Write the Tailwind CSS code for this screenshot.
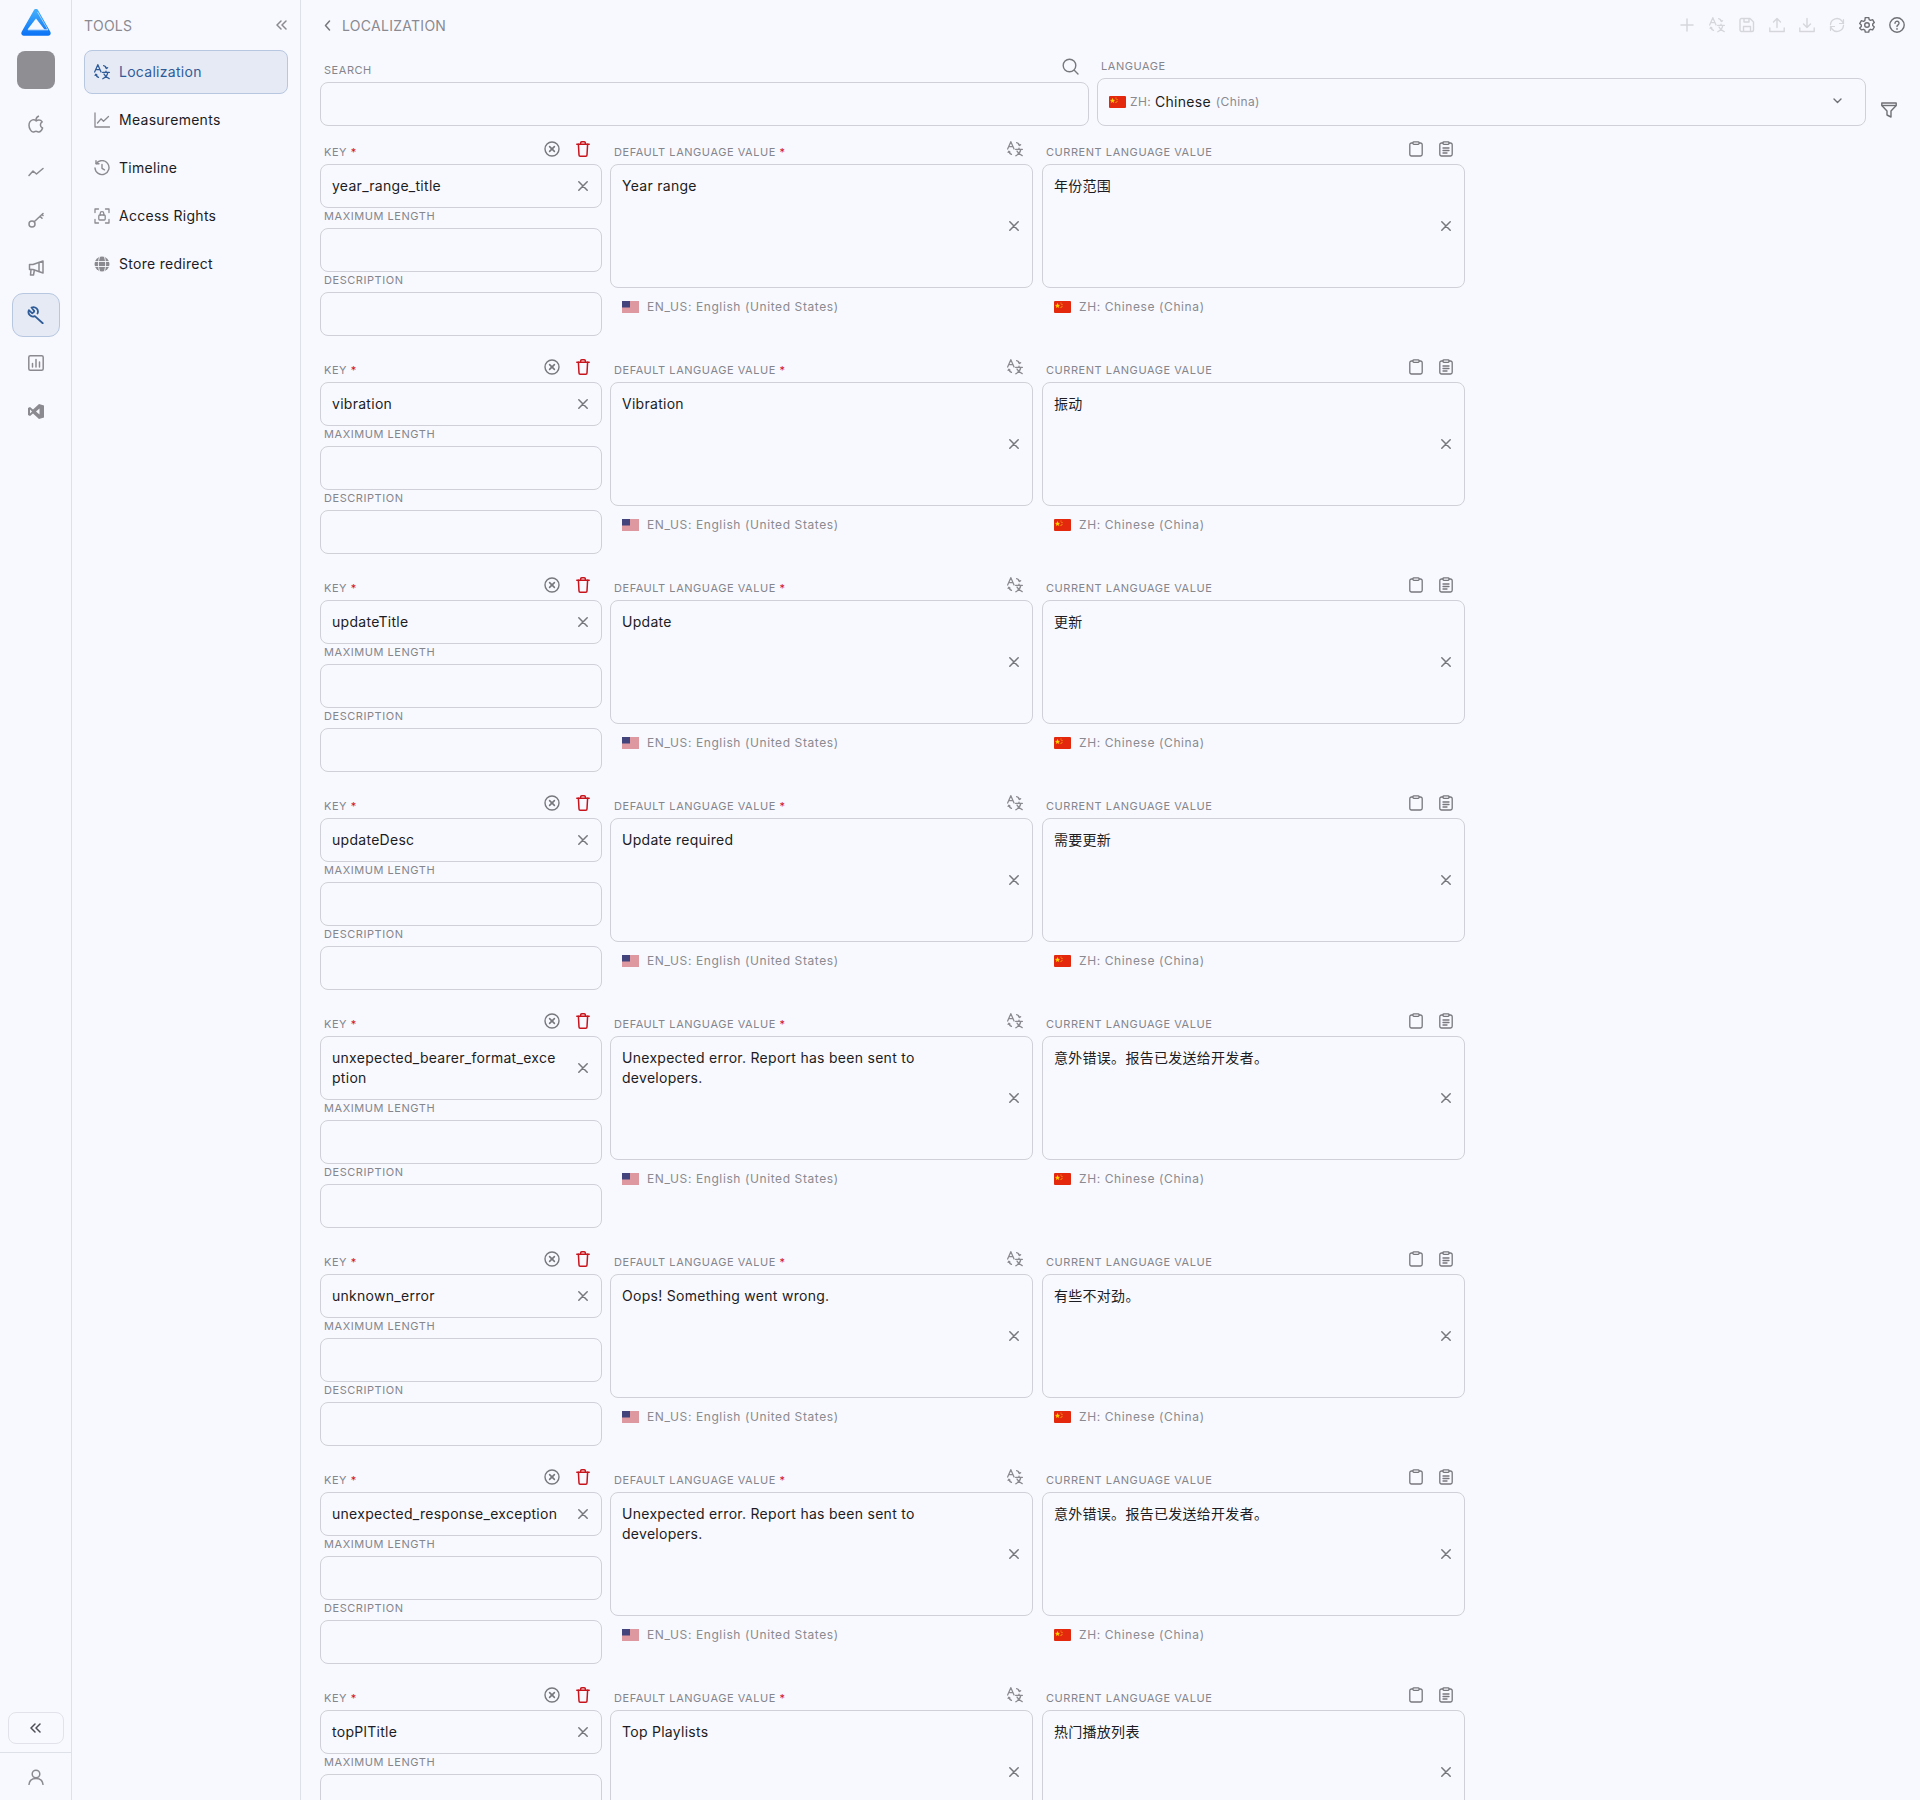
<!DOCTYPE html>
<html lang="en">
<head>
    <meta charset="UTF-8">
    <title>Localization</title>
    <script src="https://cdn.jsdelivr.net/npm/@tailwindcss/browser@4"></script>
</head>
<body class="bg-[#f8f9ff] text-[#1c1c22] font-['Inter','Noto_Sans_CJK_SC',sans-serif] text-sm">
    <svg class="absolute w-0 h-0">
        <defs>
            <linearGradient id="logo-grad" x1="0" y1="0" x2="0" y2="1">
                <stop offset="0" stop-color="#45b0fc"/>
                <stop offset="1" stop-color="#0a72f5"/>
            </linearGradient>
        </defs>
        <symbol id="i-translate" viewBox="0 0 20 20" fill="none" stroke="currentColor" stroke-width="1.6" stroke-linecap="round" stroke-linejoin="round">
            <path d="M.8 10 4.800 .8 8.800 10M2.200 7h5.200"/>
            <path d="M12 2c1.800.3 3 1.400 3.600 3.200M14.400 4.400l1.200 1.200 1.400-1"/>
            <path d="M2.400 13c.3 1.800 1.400 3 3.200 3.800M1.400 14.200l1-1.400 1.300 1"/>
            <path d="M10.800 10.500h8.400M15 8.800v1.700M17.300 10.500c-.5 3-2.900 6.200-6.300 8M12.500 12.500c1 2.400 3.400 4.500 6.500 5.800"/>
        </symbol>
        <symbol id="i-x" viewBox="0 0 10 10" fill="none" stroke="currentColor" stroke-width="1.500" stroke-linecap="round">
            <path d="M.8.8l8.400 8.400M9.200.8.800 9.200"/>
        </symbol>
        <symbol id="i-x-circle" viewBox="0 0 16 16" fill="none" stroke="currentColor" stroke-width="1.400" stroke-linecap="round">
            <circle cx="8" cy="8" r="7"/>
            <path d="M5.600 5.600l4.800 4.800M10.400 5.600l-4.800 4.800" stroke-width="1.600"/>
        </symbol>
        <symbol id="i-trash" viewBox="0 0 14 16" fill="none" stroke="currentColor" stroke-width="1.500" stroke-linecap="round" stroke-linejoin="round">
            <path d="M.8 3.300h12.400M4.600 3.300V2a1.200 1.200 0 0 1 1.200-1.200h2.400A1.200 1.200 0 0 1 9.400 2v1.300"/>
            <path d="M2.400 3.300 3 14a1.200 1.200 0 0 0 1.200 1.200h5.600A1.200 1.200 0 0 0 11 14l.6-10.700"/>
        </symbol>
        <symbol id="i-clip" viewBox="0 0 14 16" fill="none" stroke="currentColor" stroke-width="1.300" stroke-linejoin="round">
            <path d="M4 2H2.500A1.700 1.700 0 0 0 .8 3.700v9.600A1.700 1.700 0 0 0 2.500 15h9a1.700 1.700 0 0 0 1.700-1.700V3.700A1.700 1.700 0 0 0 11.500 2H10"/>
            <rect x="4" y=".8" width="6" height="2.600" rx=".8"/>
        </symbol>
        <symbol id="i-clip-text" viewBox="0 0 14 16" fill="none" stroke="currentColor" stroke-width="1.300" stroke-linejoin="round" stroke-linecap="round">
            <path d="M4 2H2.500A1.700 1.700 0 0 0 .8 3.700v9.600A1.700 1.700 0 0 0 2.500 15h9a1.700 1.700 0 0 0 1.700-1.700V3.700A1.700 1.700 0 0 0 11.500 2H10"/>
            <rect x="4" y=".8" width="6" height="2.600" rx=".8"/>
            <path d="M4 7h6M4 9.500h6M4 12h4"/>
        </symbol>
        <symbol id="flag-us" viewBox="0 0 17 12">
            <rect width="17" height="12" fill="#f4f1f1"/>
            <path d="M0 1h17M0 3h17M0 5h17M0 7h17M0 9h17M0 11h17" stroke="#c8414f" stroke-width="1"/>
            <rect width="8" height="6.500" fill="#44447c"/>
        </symbol>
        <symbol id="flag-cn" viewBox="0 0 17 12">
            <rect width="17" height="12" rx="1" fill="#e3280e"/>
            <path d="M3.500 1.800l.7 2 2 .1-1.600 1.200.6 2-1.700-1.200-1.700 1.200.6-2L.8 3.900l2-.1z" fill="#fbd400"/>
            <circle cx="7" cy="2" r=".5" fill="#fbd400"/>
            <circle cx="8" cy="3.500" r=".5" fill="#fbd400"/>
            <circle cx="8" cy="5.200" r=".5" fill="#fbd400"/>
            <circle cx="7" cy="6.600" r=".5" fill="#fbd400"/>
        </symbol>
    </svg>

    <div class="flex h-[1800px] overflow-hidden">
        <!-- Icon rail -->
        <div class="w-[72px] shrink-0 border-r border-[#dfe1e8] flex flex-col items-center text-[#8a8a90]">
            <svg class="mt-2 w-[30px] h-[28px]" viewBox="0 0 30 28">
                <path d="M15 1c1 0 1.800.5 2.300 1.400L28.900 23c.4.800.8 1.300.8 2.200 0 1.600-1.100 2.500-2.500 2.500H2.800C1.400 27.700.3 26.800.3 25.200c0-.9.4-1.400.8-2.200L12.700 2.400C13.200 1.500 14 1 15 1z" fill="url(#logo-grad)"/>
                <path d="M15 10.500 23.500 21.500H6.500z" fill="#f8f9ff"/>
                <path d="M7 21.800H27" stroke="#f8f9ff" stroke-width=".8"/>
                <path d="M16.500 4 27 22" stroke="#f8f9ff" stroke-width=".8" opacity=".7"/>
            </svg>
            <div class="mt-[15px] w-[38px] h-[38px] rounded-lg bg-[#8e8e93]"></div>

            <!-- apple -->
            <div class="mt-[24px] h-[22px] flex items-center">
                <svg class="w-4 h-[18px]" viewBox="0 0 16 18" fill="none" stroke="currentColor" stroke-width="1.500" stroke-linejoin="round">
                    <path d="M8 5.500c-1-.7-2.300-1-3.500-.6C2.500 5.600 1 7.500 1 10.200c0 3 2 6.800 4 6.800 1 0 1.800-.7 3-.7s2 .7 3 .7c1.300 0 2.800-1.800 3.600-4-1.400-.7-2.200-1.800-2.200-3.100 0-1.300.7-2.300 1.800-3-.8-1.200-2-1.800-3.300-1.800-1 0-2 .4-2.900.9z"/>
                    <path d="M8 5c0-1.800 1-3.300 3-4"/>
                </svg>
            </div>
            <!-- trend -->
            <div class="mt-[26px] h-[22px] flex items-center">
                <svg class="w-4 h-[10px]" viewBox="0 0 16 10" fill="none" stroke="currentColor" stroke-width="1.500" stroke-linecap="round" stroke-linejoin="round">
                    <path d="M1 8.500 5 4l3.500 3L15 1.500"/>
                </svg>
            </div>
            <!-- key -->
            <div class="mt-[26px] h-[22px] flex items-center">
                <svg class="w-4 h-4" viewBox="0 0 16 16" fill="none" stroke="currentColor" stroke-width="1.500" stroke-linecap="round" stroke-linejoin="round">
                    <circle cx="4" cy="12" r="3"/>
                    <path d="M6.200 9.800 15 1.500M12 4.300l2 2M14 2.500l1 1"/>
                </svg>
            </div>
            <!-- megaphone -->
            <div class="mt-[26px] h-[22px] flex items-center">
                <svg class="w-4 h-4" viewBox="0 0 16 16" fill="none" stroke="currentColor" stroke-width="1.500" stroke-linejoin="round" stroke-linecap="round">
                    <path d="M15 1 5 4.500H1.500v5H5L15 13z"/>
                    <path d="M3 9.500 2.500 15h3l.8-4.500"/>
                    <path d="M11 2.500v9"/>
                </svg>
            </div>
            <!-- tools, active -->
            <div class="mt-[14px] w-12 h-11 rounded-[11px] bg-[#e6eaf4] border border-[#b7c7e0] flex items-center justify-center text-[#2f5c98]">
                <svg class="w-[18px] h-[18px]" viewBox="0 0 24 24" fill="none" stroke="currentColor" stroke-width="2.400" stroke-linecap="round" stroke-linejoin="round">
                    <path transform="translate(24 0) scale(-1 1)" d="M14.700 6.300a1 1 0 0 0 0 1.400l1.600 1.600a1 1 0 0 0 1.400 0l3.770-3.770a6 6 0 0 1-7.940 7.940L3 23"/>
                    <path transform="translate(24 0) scale(-1 1)" d="M10 10a6 6 0 0 1 7.940-7.940L14.700 6.300"/>
                </svg>
            </div>
            <!-- report -->
            <div class="mt-[15px] h-[22px] flex items-center">
                <svg class="w-4 h-4" viewBox="0 0 16 16" fill="none" stroke="currentColor" stroke-width="1.500" stroke-linecap="round">
                    <rect x=".8" y=".8" width="14.400" height="14.400" rx="1.500"/>
                    <path d="M4.500 12V8.500M8 12V4.500M11.500 12V7"/>
                </svg>
            </div>
            <!-- vs code -->
            <div class="mt-[26px] h-[22px] flex items-center">
                <svg class="w-4 h-[15px]" viewBox="0 0 16 15" fill="currentColor">
                    <path d="M11 0l5 1.500v12L11 15 5 9.500 2 12 0 11V4l2-1 3 2.500zM2 5.500v4l2-2zM11.500 4.500 8 7.500l3.500 3z" fill-rule="evenodd"/>
                </svg>
            </div>

            <div class="mt-auto w-14 h-8 rounded-lg border border-[#e2e3ea] flex items-center justify-center text-[#4d4d55]">
                <svg class="w-[11px] h-[10px]" viewBox="0 0 11 10" fill="none" stroke="currentColor" stroke-width="1.500" stroke-linecap="round" stroke-linejoin="round">
                    <path d="M5 1 1 5l4 4M10 1 6 5l4 4"/>
                </svg>
            </div>
            <div class="mt-2 w-full h-12 border-t border-[#dfe1e8] flex items-center justify-center">
                <svg class="w-4 h-4" viewBox="0 0 16 16" fill="none" stroke="currentColor" stroke-width="1.500" stroke-linecap="round">
                    <circle cx="8" cy="5" r="3.800"/>
                    <path d="M1 15.500c.4-3.500 3-6 7-6s6.600 2.500 7 6"/>
                </svg>
            </div>
        </div>

        <!-- Tools panel -->
        <div class="w-[229px] shrink-0 border-r border-[#dfe1e8] px-3">
            <div class="h-[50px] flex items-center justify-between pr-[1px]">
                <span class="text-[#8a8a90] tracking-[0.02em] mt-[1px]">TOOLS</span>
                <svg class="w-[11px] h-[10px] text-[#8a8a90]" viewBox="0 0 11 10" fill="none" stroke="currentColor" stroke-width="1.500" stroke-linecap="round" stroke-linejoin="round">
                    <path d="M5 1 1 5l4 4M10 1 6 5l4 4"/>
                </svg>
            </div>
            <div class="flex flex-col gap-1">
                <div class="h-11 rounded-lg bg-[#e6eaf4] border border-[#b7c7e0] flex items-center gap-[9px] pl-[9px] text-[#2f5c98] tracking-[0.02em]">
                    <svg class="w-4 h-4 shrink-0"><use href="#i-translate"/></svg>
                    <span>Localization</span>
                </div>
                <div class="h-11 flex items-center gap-[9px] pl-[10px] tracking-[0.02em]">
                    <svg class="w-4 h-4 shrink-0 text-[#8a8a90]" viewBox="0 0 16 16" fill="none" stroke="currentColor" stroke-width="1.300" stroke-linecap="round" stroke-linejoin="round">
                        <path d="M1 1v14h14.500"/>
                        <path d="M3.500 11 7 6.800l2.500 2.400L14.500 4.500"/>
                    </svg>
                    <span>Measurements</span>
                </div>
                <div class="h-11 flex items-center gap-[9px] pl-[10px] tracking-[0.02em]">
                    <svg class="w-4 h-4 shrink-0 text-[#8a8a90]" viewBox="0 0 16 16" fill="none" stroke="currentColor" stroke-width="1.400" stroke-linecap="round" stroke-linejoin="round">
                        <path d="M2.300 3.500A7 7 0 1 1 1 8"/>
                        <path d="M2 .8v3h3M8 4.500V8.300l2.500 1.500"/>
                    </svg>
                    <span>Timeline</span>
                </div>
                <div class="h-11 flex items-center gap-[9px] pl-[10px] tracking-[0.02em]">
                    <svg class="w-4 h-4 shrink-0 text-[#8a8a90]" viewBox="0 0 16 16" fill="none" stroke="currentColor" stroke-width="1.300" stroke-linecap="round" stroke-linejoin="round">
                        <path d="M1 4.500V1h3.500M11.500 1H15v3.500M15 11.500V15h-3.500M4.500 15H1v-3.500"/>
                        <rect x="4.800" y="7" width="6.400" height="5" rx="1"/>
                        <path d="M6.200 7V5.500a1.800 1.800 0 0 1 3.600 0V7"/>
                    </svg>
                    <span>Access Rights</span>
                </div>
                <div class="h-11 flex items-center gap-[9px] pl-[10px] tracking-[0.02em]">
                    <svg class="w-4 h-4 shrink-0 text-[#8a8a90]" viewBox="0 0 16 16">
                        <circle cx="8" cy="8" r="7.500" fill="currentColor"/>
                        <path d="M.5 5.500h15M.5 10.500h15M5.500 1c-1.500 4-1.500 10 0 14M10.500 1c1.500 4 1.500 10 0 14" stroke="#f8f9ff" stroke-width=".9" fill="none"/>
                    </svg>
                    <span>Store redirect</span>
                </div>
            </div>
        </div>

        <!-- Main -->
        <div class="flex-1 min-w-0 pl-[19px]">
            <div class="h-[50px] flex items-center pr-[15px]">
                <svg class="w-[7px] h-[11px] ml-[4px] text-[#77777e]" viewBox="0 0 7 11" fill="none" stroke="currentColor" stroke-width="1.500" stroke-linecap="round" stroke-linejoin="round">
                    <path d="M5.500 1 1.500 5.500l4 4.500"/>
                </svg>
                <span class="ml-[11px] mt-[1px] text-[#8a8a90] tracking-[0.02em]">LOCALIZATION</span>
                <div class="ml-auto flex items-center gap-[14px]">
                    <svg class="w-4 h-4 text-[#d5d6dc]" viewBox="0 0 16 16" fill="none" stroke="currentColor" stroke-width="1.500" stroke-linecap="round"><path d="M8 2v12M2 8h12"/></svg>
                    <svg class="w-4 h-4 text-[#d5d6dc]"><use href="#i-translate"/></svg>
                    <svg class="w-4 h-4 text-[#d5d6dc]" viewBox="0 0 16 16" fill="none" stroke="currentColor" stroke-width="1.400" stroke-linejoin="round"><path d="M2.500 1.500h8.500l3.500 3.500v8a1.500 1.500 0 0 1-1.500 1.500h-10.500A1.500 1.500 0 0 1 1 13V3a1.500 1.500 0 0 1 1.500-1.500z"/><path d="M5 1.500v3.500h5V1.500M4.500 14.500V9.500h7v5"/></svg>
                    <svg class="w-4 h-4 text-[#d5d6dc]" viewBox="0 0 16 16" fill="none" stroke="currentColor" stroke-width="1.400" stroke-linecap="round" stroke-linejoin="round"><path d="M8 10.500V1.500M4.500 5 8 1.500 11.500 5M.8 11v3.500h14.400V11"/></svg>
                    <svg class="w-4 h-4 text-[#d5d6dc]" viewBox="0 0 16 16" fill="none" stroke="currentColor" stroke-width="1.400" stroke-linecap="round" stroke-linejoin="round"><path d="M8 1.500v9M4.500 7 8 10.500 11.500 7M.8 11v3.500h14.400V11"/></svg>
                    <svg class="w-4 h-4 text-[#d5d6dc]" viewBox="0 0 16 16" fill="none" stroke="currentColor" stroke-width="1.400" stroke-linecap="round" stroke-linejoin="round"><path d="M1.500 7.500A6.500 6.500 0 0 1 13 4l1.500 2.500M14.500 8.500A6.500 6.500 0 0 1 3 12l-1.500-2.500"/><path d="M14.500 2.500v4h-4M1.500 13.500v-4h4" stroke-width="1.200"/></svg>
                    <svg class="w-4 h-4 text-[#6f6f76]" viewBox="0 0 16 16" fill="none" stroke="currentColor" stroke-width="1.400" stroke-linejoin="round"><path d="M6.300 1h3.400l.5 2.100 1.300.7 2.100-.6 1.700 2.900-1.600 1.500v1.400l1.600 1.500-1.700 2.900-2.100-.6-1.300.7-.5 2.100H6.300l-.5-2.100-1.300-.7-2.100.6L.7 11.500l1.600-1.500V8.600L.7 7.100l1.700-2.900 2.100.6 1.300-.7z" transform="translate(0 -.5)"/><circle cx="8" cy="8" r="2.300"/></svg>
                    <svg class="w-4 h-4 text-[#6f6f76]" viewBox="0 0 16 16" fill="none" stroke="currentColor" stroke-width="1.400" stroke-linecap="round"><circle cx="8" cy="8" r="7.200"/><path d="M6 6.200a2 2 0 1 1 3.100 1.700C8.400 8.400 8 8.800 8 9.600"/><path d="M8 11.800v.1" stroke-width="1.700"/></svg>
                </div>
            </div>

            <!-- Search and language filter -->
            <div class="flex items-end gap-2 w-[1590px]">
                <div class="w-[769px]">
                    <div class="flex justify-between items-center pl-1 h-[32px]">
                        <label class="text-[11px] tracking-[0.05em] text-[#85858c] mt-[10px]">SEARCH</label>
                        <svg class="w-[17px] h-[17px] mr-[10px] text-[#77777e]" viewBox="0 0 17 17" fill="none" stroke="currentColor" stroke-width="1.400" stroke-linecap="round"><circle cx="7.500" cy="7.500" r="6.300"/><path d="m12.500 12.500 3.500 3.500"/></svg>
                    </div>
                    <div class="h-11 rounded-lg border border-[#d0d1d8]"></div>
                </div>
                <div class="w-[769px]">
                    <label class="block pl-1 text-[11px] tracking-[0.05em] text-[#85858c] mb-[3px]">LANGUAGE</label>
                    <div class="h-12 rounded-lg border border-[#d0d1d8] flex items-center pl-[11px] pr-[23px]">
                        <svg class="w-[17px] h-3 shrink-0"><use href="#flag-cn"/></svg>
                        <span class="ml-[4px] text-[12px] tracking-[0.03em] text-[#8a8a90]">ZH:</span>
                        <span class="ml-[4px] tracking-[0.02em]">Chinese</span>
                        <span class="ml-[5px] text-[12px] tracking-[0.03em] text-[#8a8a90]">(China)</span>
                        <svg class="ml-auto -mt-[2px] w-[9px] h-[6px] text-[#6f6f76]" viewBox="0 0 9 6" fill="none" stroke="currentColor" stroke-width="1.400" stroke-linecap="round" stroke-linejoin="round"><path d="m1 1 3.500 3.500L8 1"/></svg>
                    </div>
                </div>
                <svg class="w-[16px] h-[16px] ml-[7px] mb-[8px] text-[#6f6f76]" viewBox="0 0 16 16" fill="none" stroke="currentColor" stroke-width="1.400" stroke-linejoin="round"><path d="M.8 1h14.400v2.500L10 9v6l-4-2V9L.8 3.500z"/><path d="M.8 3.500h14.400"/></svg>
            </div>

            <div id="rows" class="w-[1145px]"></div>
        </div>
    </div>

    <script>
        const rows = [
            ["year_range_title", "Year range", "年份范围"],
            ["vibration", "Vibration", "振动"],
            ["updateTitle", "Update", "更新"],
            ["updateDesc", "Update required", "需要更新"],
            ["unxepected_bearer_format_exception", "Unexpected error. Report has been sent to developers.", "意外错误。报告已发送给开发者。"],
            ["unknown_error", "Oops! Something went wrong.", "有些不对劲。"],
            ["unexpected_response_exception", "Unexpected error. Report has been sent to developers.", "意外错误。报告已发送给开发者。"],
            ["topPlTitle", "Top Playlists", "热门播放列表"],
        ];

        function rowHtml(row) {
            return `
            <div class="flex gap-2 pt-[26px] pb-[20px] first:pt-[38px]">
                <div class="w-[282px] shrink-0">
                    <div class="h-[26px] -mt-[26px] flex items-center pl-1 pr-[12px]">
                        <label class="text-[11px] tracking-[0.05em] text-[#85858c] mt-[4px]">KEY <span class="text-[#d3121b]">*</span></label>
                        <svg class="ml-auto -mt-[4px] w-4 h-4 text-[#77777e]"><use href="#i-x-circle"/></svg>
                        <svg class="ml-[16px] -mt-[4px] w-[14px] h-4 text-[#c8141c]"><use href="#i-trash"/></svg>
                    </div>
                    <div class="rounded-lg border border-[#d0d1d8] flex items-center pl-[11px] pr-[13px] py-[11px]">
                        <div class="flex-1 min-w-0 break-all leading-[20px] tracking-[0.02em]">${row[0]}</div>
                        <svg class="w-[10px] h-[10px] ml-[18px] shrink-0 text-[#77777e]"><use href="#i-x"/></svg>
                    </div>
                    <label class="block h-[20px] pl-1 pt-[1px] text-[11px] tracking-[0.05em] text-[#85858c]">MAXIMUM LENGTH</label>
                    <div class="h-11 rounded-lg border border-[#d0d1d8]"></div>
                    <label class="block h-[20px] pl-1 pt-[1px] text-[11px] tracking-[0.05em] text-[#85858c]">DESCRIPTION</label>
                    <div class="h-11 rounded-lg border border-[#d0d1d8]"></div>
                </div>
                <div class="w-[423px] shrink-0">
                    <div class="h-[26px] -mt-[26px] flex items-center pl-1 pr-[10px]">
                        <label class="text-[11px] tracking-[0.05em] text-[#85858c] mt-[4px]">DEFAULT LANGUAGE VALUE <span class="text-[#d3121b]">*</span></label>
                        <svg class="ml-auto -mt-[4px] w-4 h-4 text-[#8a8a90]"><use href="#i-translate"/></svg>
                    </div>
                    <div class="h-[124px] rounded-lg border border-[#d0d1d8] flex items-center pl-[11px] pr-[13px]">
                        <div class="self-start flex-1 mr-[70px] pt-[11px] leading-[20px] tracking-[0.02em]">${row[1]}</div>
                        <svg class="w-[10px] h-[10px] shrink-0 text-[#77777e]"><use href="#i-x"/></svg>
                    </div>
                    <div class="flex items-center pl-3 mt-[10px] text-[12px] tracking-[0.05em] text-[#8a8a90]">
                        <svg class="w-[17px] h-3 shrink-0 mr-2"><use href="#flag-us"/></svg>
                        <span>EN_US: English (United States)</span>
                    </div>
                </div>
                <div class="w-[423px] shrink-0 ml-[1px]">
                    <div class="h-[26px] -mt-[26px] flex items-center pl-1 pr-[12px]">
                        <label class="text-[11px] tracking-[0.05em] text-[#85858c] mt-[4px]">CURRENT LANGUAGE VALUE</label>
                        <svg class="ml-auto -mt-[4px] w-[14px] h-4 text-[#77777e]"><use href="#i-clip"/></svg>
                        <svg class="ml-[16px] -mt-[4px] w-[14px] h-4 text-[#77777e]"><use href="#i-clip-text"/></svg>
                    </div>
                    <div class="h-[124px] rounded-lg border border-[#d0d1d8] flex items-center pl-[11px] pr-[13px]">
                        <div class="self-start flex-1 pt-[11px] leading-[20px] tracking-[0.02em]">${row[2]}</div>
                        <svg class="w-[10px] h-[10px] shrink-0 text-[#77777e]"><use href="#i-x"/></svg>
                    </div>
                    <div class="flex items-center pl-3 mt-[10px] text-[12px] tracking-[0.05em] text-[#8a8a90]">
                        <svg class="w-[17px] h-3 shrink-0 mr-2"><use href="#flag-cn"/></svg>
                        <span>ZH: Chinese (China)</span>
                    </div>
                </div>
            </div>`;
        }

        document.getElementById("rows").innerHTML = rows.map(rowHtml).join("");
    </script>
</body>
</html>
